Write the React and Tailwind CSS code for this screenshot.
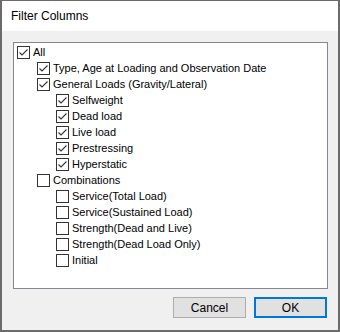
const rows = [
  { label: 'All', level: 0, checked: true },
  { label: 'Type, Age at Loading and Observation Date', level: 1, checked: true },
  { label: 'General Loads (Gravity/Lateral)', level: 1, checked: true },
  { label: 'Selfweight', level: 2, checked: true },
  { label: 'Dead load', level: 2, checked: true },
  { label: 'Live load', level: 2, checked: true },
  { label: 'Prestressing', level: 2, checked: true },
  { label: 'Hyperstatic', level: 2, checked: true },
  { label: 'Combinations', level: 1, checked: false },
  { label: 'Service(Total Load)', level: 2, checked: false },
  { label: 'Service(Sustained Load)', level: 2, checked: false },
  { label: 'Strength(Dead and Live)', level: 2, checked: false },
  { label: 'Strength(Dead Load Only)', level: 2, checked: false },
  { label: 'Initial', level: 2, checked: false },
];

const indent = ['pl-[3px]', 'pl-[23px]', 'pl-[42px]'];

function Check({ checked }) {
  return (
    <span className="w-[13px] h-[13px] shrink-0 border border-[#333333] bg-white flex items-center justify-center">
      {checked && (
        <svg width="11" height="11" viewBox="0 0 11 11" fill="none">
          <path d="M1.5 5.5 L4 8 L9.5 2.5" stroke="#333333" strokeWidth="1.1" />
        </svg>
      )}
    </span>
  );
}

export default function App() {
  return (
    <div
      className="w-[340px] h-[332px] bg-[#6b6b6b] pt-px pl-[2px] pr-[2px] pb-[2px] text-[12px] text-black"
      style={{ fontFamily: '"Liberation Sans", Arial, sans-serif' }}
    >
      <div className="w-[336px] h-[329px] bg-[#f0f0f0] flex flex-col">
        <div className="h-[30px] bg-white flex items-center pl-[9px] text-[12px]">Filter Columns</div>
        <div className="ml-[11px] mt-[11px] w-[315px] h-[247px] bg-white border border-[#828790] pt-px text-[11px]">
          {rows.map((r) => (
            <div key={r.label} className={`h-[16px] flex items-center gap-[3px] ${indent[r.level]}`}>
              <Check checked={r.checked} />
              <span className="leading-[16px] whitespace-nowrap">{r.label}</span>
            </div>
          ))}
        </div>
        <div className="mt-[8px] flex justify-end gap-[8px] pr-[11px]">
          <button className="w-[73px] h-[21px] bg-[#e1e1e1] border border-[#adadad] text-[12px] leading-none">
            Cancel
          </button>
          <button className="w-[73px] h-[21px] bg-[#e1e1e1] border-2 border-[#0078d7] text-[12px] leading-none">
            OK
          </button>
        </div>
      </div>
    </div>
  );
}
